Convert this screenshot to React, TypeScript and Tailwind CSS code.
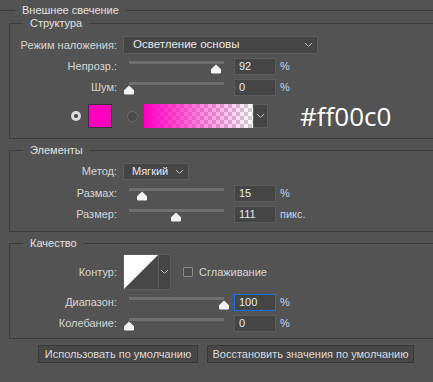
const font = "font-['Liberation_Sans',Arial,sans-serif]";

const Chevron = () => (
  <svg width="9" height="6" viewBox="0 0 9 6" fill="none">
    <path d="M1 1l3.5 3.5L8 1" stroke="#bdbdbd" strokeWidth="1" />
  </svg>
);

const Thumb = () => (
  <svg width="12" height="10" viewBox="0 0 12 10">
    <path d="M6 0.5L11 5.2V8.2Q11 9.5 9.7 9.5H2.3Q1 9.5 1 8.2V5.2Z" fill="#f2f2f2" />
  </svg>
);

const Slider = ({ value }: { value: number }) => (
  <div className="relative w-[106px] h-[17px]">
    <div className="absolute left-[6px] top-[3px] w-[95px] h-[3px] bg-[#6e6e6e]" />
    <div className="absolute top-[6px]" style={{ left: 6 + value * 95 - 6 }}>
      <Thumb />
    </div>
  </div>
);

const NumInput = ({ value, focused = false }: { value: string; focused?: boolean }) => (
  <div
    className={
      focused
        ? "w-[42px] h-[17px] bg-[#454545] border border-[#1473e6] pl-[4px] text-[11px] leading-[15px] text-[#e4ebf5]"
        : "w-[42px] h-[17px] bg-[#454545] border border-[#5c5c5c] pl-[4px] text-[11px] leading-[15px] text-[#e4ebf5]"
    }
  >
    {value}
  </div>
);

const Label = ({ children }: { children: string }) => (
  <div className="w-[107px] text-right text-[11px] text-[#d6d6d6] shrink-0">{children}</div>
);

const SliderRow = ({ label, value, pos, unit, focused }: { label: string; value: string; pos: number; unit: string; focused?: boolean }) => (
  <div className="flex items-center h-[17px]">
    <Label>{label}</Label>
    <div className="ml-[6px]">
      <Slider value={pos} />
    </div>
    <div className="ml-[5px]">
      <NumInput value={value} focused={focused} />
    </div>
    <div className="ml-[4px] text-[11px] text-[#c9d3e6]">{unit}</div>
  </div>
);

const Group = ({ title, className, children }: { title: string; className: string; children: React.ReactNode }) => (
  <fieldset className={"ml-[9px] w-[440px] border border-[#3e3e3e] px-0 " + className}>
    <legend className="ml-[13px] px-[7px] text-[11px] leading-[13px] text-[#e2e2e2]">{title}</legend>
    {children}
  </fieldset>
);

export default function App() {
  return (
    <div className={"w-[433px] h-[382px] bg-[#535353] overflow-hidden " + font}>
      <fieldset className="mt-[4px] w-[460px] border-t border-[#3e3e3e] p-0">
        <legend className="ml-[15px] px-[7px] text-[11px] leading-[13px] text-[#e2e2e2]">Внешнее свечение</legend>

        <Group title="Структура" className="mt-[0px] pb-[10px]">
          <div className="pt-[6px] flex flex-col">
            <div className="flex items-center h-[18px]">
              <Label>Режим наложения:</Label>
              <div className="ml-[6px] w-[195px] h-[18px] bg-[#454545] border border-[#5c5c5c] flex items-center justify-between pl-[9px] pr-[4px]">
                <span className="text-[11.5px] text-[#e8e8e8]">Осветление основы</span>
                <Chevron />
              </div>
            </div>
            <div className="mt-[4px]">
              <SliderRow label="Непрозр.:" value="92" pos={0.92} unit="%" />
            </div>
            <div className="mt-[4px]">
              <SliderRow label="Шум:" value="0" pos={0} unit="%" />
            </div>
            <div className="mt-[8px] flex items-center h-[24px]">
              <div className="w-[61px] shrink-0" />
              <div className="w-[10px] h-[10px] rounded-full bg-[#dadada] flex items-center justify-center">
                <div className="w-[4px] h-[4px] rounded-full bg-[#444]" />
              </div>
              <div className="ml-[7px] w-[24px] h-[24px] bg-[#ff00c0] border border-[#333]" />
              <div className="ml-[15px] w-[11px] h-[11px] rounded-full bg-[#4a4a4a] border border-[#6a6a6a]" />
              <div className="ml-[6px] w-[109px] h-[24px] [background:linear-gradient(to_right,#ff00c0,rgba(255,0,192,0)),repeating-conic-gradient(#cfcfcf_0_25%,#ffffff_0_50%)_0_0/8px_8px]" />
              <div className="w-[15px] h-[24px] bg-[#454545] border border-[#5c5c5c] flex items-center justify-center">
                <Chevron />
              </div>
              <div className="ml-[32px] font-['Open_Sans',sans-serif] text-[26px] leading-[24px] text-white">#ff00c0</div>
            </div>
          </div>
        </Group>

        <Group title="Элементы" className="mt-[5px] pb-[8px]">
          <div className="pt-[6px] flex flex-col">
            <div className="flex items-center h-[17px]">
              <Label>Метод:</Label>
              <div className="ml-[6px] w-[66px] h-[17px] bg-[#454545] border border-[#5c5c5c] flex items-center justify-between pl-[8px] pr-[4px]">
                <span className="text-[11px] text-[#e8e8e8]">Мягкий</span>
                <Chevron />
              </div>
            </div>
            <div className="mt-[5px]">
              <SliderRow label="Размах:" value="15" pos={0.14} unit="%" />
            </div>
            <div className="mt-[4px]">
              <SliderRow label="Размер:" value="111" pos={0.49} unit="пикс." />
            </div>
          </div>
        </Group>

        <Group title="Качество" className="mt-[5px] pb-[6px]">
          <div className="pt-[4px] flex flex-col">
            <div className="flex items-center h-[36px]">
              <Label>Контур:</Label>
              <div className="ml-[6px] flex h-[36px] border border-[#5c5c5c]">
                <svg width="34" height="34" viewBox="0 0 34 34" className="block">
                  <rect width="34" height="34" fill="#474747" />
                  <polygon points="0,0 34,0 0,34" fill="#ffffff" />
                </svg>
                <div className="w-[12px] bg-[#454545] border-l border-[#5c5c5c] flex items-center justify-center">
                  <Chevron />
                </div>
              </div>
              <div className="ml-[12px] w-[10px] h-[10px] border border-[#8a8a8a] rounded-[1px] bg-[#4a4a4a]" />
              <span className="ml-[6px] text-[11px] text-[#d6d6d6]">Сглаживание</span>
            </div>
            <div className="mt-[4px]">
              <SliderRow label="Диапазон:" value="100" pos={1} unit="%" focused />
            </div>
            <div className="mt-[4px]">
              <SliderRow label="Колебание:" value="0" pos={0} unit="%" />
            </div>
          </div>
        </Group>
      </fieldset>

      <div className="mt-[6px] flex pl-[38px] gap-[9px]">
        <div className="w-[160px] h-[18px] bg-[#474747] border border-[#3a3a3a] flex items-center justify-center text-[11px] text-[#dcdcdc]">
          Использовать по умолчанию
        </div>
        <div className="w-[207px] h-[18px] bg-[#474747] border border-[#3a3a3a] flex items-center justify-center text-[11px] text-[#dcdcdc]">
          Восстановить значения по умолчанию
        </div>
      </div>
    </div>
  );
}
